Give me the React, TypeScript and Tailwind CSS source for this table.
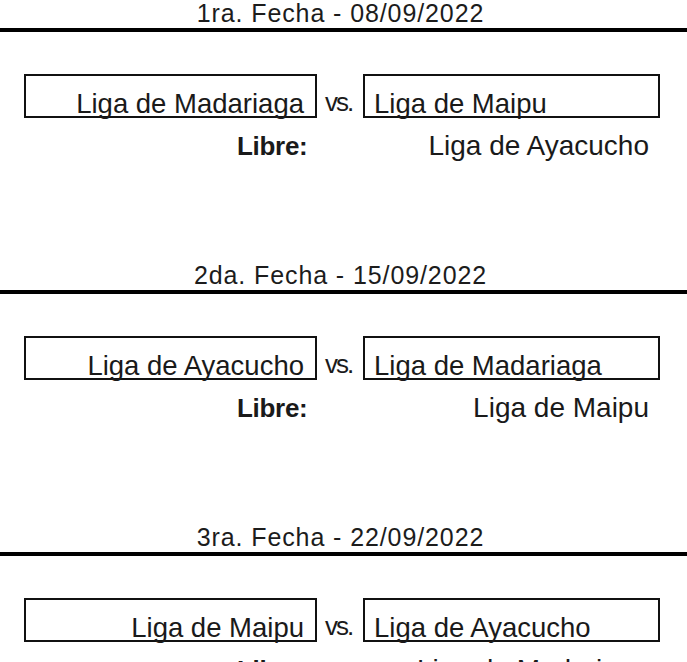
const fechas = [
  { titulo: "1ra. Fecha - 08/09/2022", local: "Liga de Madariaga", visita: "Liga de Maipu", libre: "Liga de Ayacucho" },
  { titulo: "2da. Fecha - 15/09/2022", local: "Liga de Ayacucho", visita: "Liga de Madariaga", libre: "Liga de Maipu" },
  { titulo: "3ra. Fecha - 22/09/2022", local: "Liga de Maipu", visita: "Liga de Ayacucho", libre: "Liga de Madariaga" },
];

function Fecha({ titulo, local, visita, libre }: (typeof fechas)[number]) {
  return (
    <section className="h-[262px] shrink-0">
      <h2 className="pr-[6px] text-center text-[25px] leading-[26px] tracking-[0.9px] text-[#1c1c1c]">{titulo}</h2>
      <div className="mt-[2px] h-[4px] bg-black" />

      <div className="mt-[42px] flex items-start pl-[24px]">
        <div className="h-[44px] w-[293px] border-2 border-[#111] pr-[11px] pt-[14px] text-right text-[27.5px] leading-[28px]">
          {local}
        </div>
        <span className="ml-[8px] mt-[15px] w-[32px] text-[26px] leading-[26px] tracking-[-2px]">vs.</span>
        <div className="ml-[6px] h-[44px] w-[297px] border-2 border-[#111] pl-[9px] pt-[14px] text-[27.5px] leading-[28px]">
          {visita}
        </div>
      </div>

      <div className="mt-[14px] flex items-baseline pl-[237px] pr-[38px]">
        <span className="text-[26px] font-bold leading-[28px] tracking-[-0.3px]">Libre:</span>
        <span className="flex-1 text-right text-[28px] leading-[28px]">{libre}</span>
      </div>
    </section>
  );
}

export default function App() {
  return (
    <div className="flex h-[662px] w-[687px] flex-col overflow-hidden bg-white font-['Liberation_Sans',Arial,sans-serif] text-[#1a1a1a]">
      {fechas.map((f) => (
        <Fecha key={f.titulo} {...f} />
      ))}
    </div>
  );
}
